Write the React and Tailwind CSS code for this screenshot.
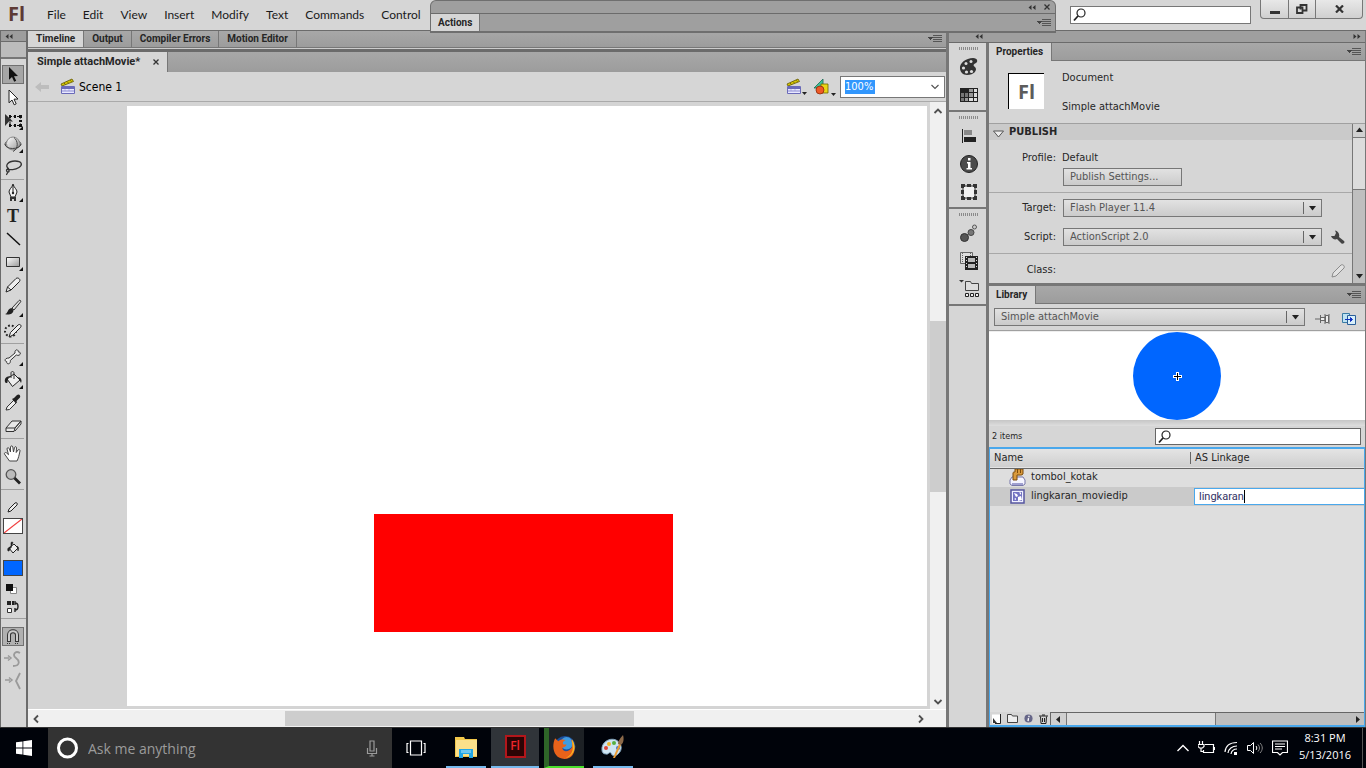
import { useState } from 'react';

const MENUS = ['File', 'Edit', 'View', 'Insert', 'Modify', 'Text', 'Commands', 'Control'];

const BOTTOM_TABS = ['Timeline', 'Output', 'Compiler Errors', 'Motion Editor'];

/* ---------- small shared glyphs ---------- */

function PanelMenuIcon() {
  return (
    <svg width="14" height="8" viewBox="0 0 14 8" shapeRendering="crispEdges" aria-hidden="true">
      <path d="M0 2h5L2.5 5z" fill="#444" />
      <path d="M5 .5h9M5 2.5h9M5 4.5h9M5 6.5h9" stroke="#555" />
    </svg>
  );
}

function DoubleArrow({ right }) {
  return (
    <svg width="8" height="5" viewBox="0 0 8 5" aria-hidden="true" className={right ? 'rotate-180' : ''}>
      <path d="M3.5 0v5L.5 2.5zM7.5 0v5L4.5 2.5z" fill="#333" />
    </svg>
  );
}

function CloseIcon() {
  return (
    <svg width="6" height="6" viewBox="0 0 6 6" stroke="#333" strokeWidth="1.3" aria-hidden="true">
      <path d="M.5.5l5 5M5.5.5l-5 5" />
    </svg>
  );
}

function SearchIcon() {
  return (
    <svg width="14" height="14" viewBox="0 0 14 14" fill="none" stroke="#222" aria-hidden="true">
      <circle cx="8" cy="5" r="4" strokeWidth="1.2" />
      <path d="M5 8L1 12.5" strokeWidth="1.8" />
    </svg>
  );
}

function Clapper() {
  return (
    <svg width="16" height="17" viewBox="0 0 16 17" aria-hidden="true">
      <path d="M1 6L12 1l1.5 2.5L2 8z" fill="#d8c800" stroke="#5f5600" strokeWidth=".8" />
      <path d="M4 5l1.5 1.5M7 3.5L8.5 5M10 2.2l1.5 1.5" stroke="#5f5600" strokeWidth=".8" />
      <path d="M1.5 8.5h13v7h-13z" fill="#e8e8ff" stroke="#6a6ab8" />
      <path d="M2 9h12v2H2z" fill="#6a6ab8" />
      <path d="M2 13h12M5 11.5v1M9 11.5v1" stroke="#8a8ad0" />
    </svg>
  );
}

function ShapesIcon() {
  return (
    <svg width="18" height="18" viewBox="0 0 18 18" aria-hidden="true">
      <path d="M1 10L10 1v9z" fill="#3dc19a" stroke="#166b52" strokeWidth=".8" />
      <path d="M8 6h7v9H8z" fill="#e9d616" stroke="#6e6400" strokeWidth=".8" />
      <circle cx="7" cy="12" r="4" fill="#ef5a26" stroke="#8d2a0b" strokeWidth=".8" />
    </svg>
  );
}

function SmallCaret() {
  return (
    <svg width="5" height="3" viewBox="0 0 5 3" aria-hidden="true">
      <path d="M0 0h5L2.5 3z" fill="#222" />
    </svg>
  );
}

function Chevron({ dir = 'down', thin }) {
  const d = {
    down: 'M1.5 3L5 6.5 8.5 3',
    up: 'M1.5 7L5 3.5 8.5 7',
    left: 'M7 1.5L3.5 5 7 8.5',
    right: 'M3 1.5L6.5 5 3 8.5',
  }[dir];
  return (
    <svg width="10" height="10" viewBox="0 0 10 10" fill="none" stroke="#505050" strokeWidth={thin ? 1.1 : 1.8} aria-hidden="true">
      <path d={d} />
    </svg>
  );
}

function Triangle({ dir = 'down' }) {
  const d = { down: 'M0 1h7L3.5 5.5z', up: 'M0 5h7L3.5.5z', left: 'M5 0v7L1 3.5z', right: 'M2 0v7l4-3.5z' }[dir];
  return (
    <svg width="7" height="7" viewBox="0 0 7 7" aria-hidden="true">
      <path d={d} fill="#222" />
    </svg>
  );
}

/* ---------- tool strip ---------- */

const TOOL_GROUPS = [
  [
    { name: 'Selection', active: true, art: <path d="M8 3l9 9-4 .2 2.2 4.6-2 1L11 13l-3 2.8z" fill="#111" /> },
    { name: 'Subselection', art: <path d="M8 3l9 9-4 .2 2.2 4.6-2 1L11 13l-3 2.8z" fill="#fff" stroke="#222" /> },
    {
      name: 'Free Transform', more: true,
      art: (
        <>
          <path d="M9 6.5h10.5v9H9z" fill="none" stroke="#111" strokeDasharray="2 1.5" />
          <path d="M8 5h2v3H8zM13 5h2v3h-2zM18 5h3v3h-3zM18 10h3v2h-3zM18 14h3v3h-3zM13 14h2v3h-2zM8 14h2v3H8z" fill="#111" />
          <path d="M4 4l8 7.5H8L4 16z" fill="#333" />
        </>
      ),
    },
    {
      name: '3D Rotation', more: true,
      art: (
        <>
          <ellipse cx="12" cy="11" rx="8" ry="4" fill="#ccc" stroke="#555" />
          <circle cx="12" cy="10.5" r="6.5" fill="url(#ball)" stroke="#888" />
          <path d="M4 11c0 6 15 6 16 0M12 18.5c6-3 5-11 1-14" fill="none" stroke="#444" />
        </>
      ),
    },
    { name: 'Lasso', art: <path d="M8 13c-5-3-1-8 6-8s8 4 4 6.5-9 2.5-11 1.5c-2 0-2 3 0 3 2-.5 1-3-1-2.5M6 15.5c1 1.5 0 3-1 3" fill="none" stroke="#333" strokeWidth="1.3" /> },
  ],
  [
    {
      name: 'Pen', more: true,
      art: (
        <>
          <path d="M12 2c1 4 4 5 4 8l-2 5h-4l-2-5c0-3 3-4 4-8z" fill="#f4f4f4" stroke="#222" />
          <path d="M12 3v7" stroke="#222" /><circle cx="12" cy="11" r="1.2" fill="#222" />
          <path d="M9 15h6v4h-2v-2h-2v2H9z" fill="#333" />
        </>
      ),
    },
    { name: 'Text', art: <text x="12" y="17" textAnchor="middle" className="fill-[#222] font-['Liberation_Serif',serif] text-[18px] font-bold">T</text> },
    { name: 'Line', art: <path d="M6 5l13 12" stroke="#111" strokeWidth="1.5" /> },
    { name: 'Rectangle', more: true, art: <path d="M5.5 6.5h13v9h-13z" fill="url(#ball)" stroke="#333" /> },
    { name: 'Pencil', art: <path d="M5 18l1.5-5L15 4.5c2-1.5 5 .8 3.5 3L10 16zM6.5 13l3.5 3" fill="#eee" stroke="#222" /> },
    {
      name: 'Brush', more: true,
      art: (
        <>
          <path d="M11 11l7-7.5c1-1 2.5.5 1.5 1.5L13 13z" fill="#ddd" stroke="#333" />
          <path d="M4 17c3 0 2-5 6.5-6l2 2c0 4-5 5.5-8.5 4z" fill="#222" />
        </>
      ),
    },
    {
      name: 'Deco',
      art: (
        <>
          <circle cx="9.5" cy="11" r="5.5" fill="none" stroke="#222" strokeWidth="2" strokeDasharray="1.8 2" />
          <path d="M8 17l1.5-4.5L17 5c2-1.5 4 .5 2.5 2.5L12 15z" fill="#eee" stroke="#222" />
        </>
      ),
    },
  ],
  [
    { name: 'Bone', more: true, art: <path d="M8 12l6-5c-.5-3 2-4 3-2.5.5.8.3 1.5.3 1.5s1.7-.3 2 1c.4 2-2 3-4 2l-6 5.5c.5 2.5-1.5 4-3 3-.8-.6-.6-2-.6-2s-1.300 0-1.5-1c-.4-1.6 1.300-2.5 3.800-2.5z" fill="#eee" stroke="#333" /> },
    {
      name: 'Paint Bucket', more: true,
      art: (
        <>
          <path d="M6 10l7-5 6 6-7.5 6.5z" fill="#eee" stroke="#222" />
          <path d="M10 9V4c0-2 3-2 3 0v6" fill="none" stroke="#333" />
          <path d="M4 13c-1-4 2-6 6-6-3 1-3 3-3.5 6.5-1 .8-2 .8-2.5-.5zM17 8c4 1 4 4 3 6z" fill="#222" />
        </>
      ),
    },
    {
      name: 'Eyedropper',
      art: (
        <>
          <path d="M5 18l1-3 7-7 2.5 2.5-7 7z" fill="#eee" stroke="#333" />
          <path d="M11 7l2-1 3-3c2-1.5 4 .5 3 2.5l-3 3-1 3z" fill="#222" />
        </>
      ),
    },
    { name: 'Eraser', art: <path d="M5 13l6-7h9l-6 7-1 3.5H5zM5 13h9M14 13l6-7v3l-6 7" fill="#e8e8e8" stroke="#333" /> },
  ],
  [
    { name: 'Hand', art: <path d="M8.5 18l-5-7c-.5-1.5 1.5-2 2.5-.7l1.5 1.4L6 6c0-1.7 1.8-1.7 2.3-.3L9.5 9V4c.2-1.5 2-1.5 2.3 0L12.5 9l1-4.5c.5-1.300 2-1 2 .5L15.2 9.5 17 7c.8-1 2.300-.3 2 1-1 4.5-1.5 7-3 10z" fill="#fff" stroke="#444" /> },
    {
      name: 'Zoom',
      art: (
        <>
          <circle cx="10" cy="8.5" r="4.8" fill="#bbb" stroke="#555" strokeWidth="1.3" />
          <path d="M13.5 12l5.5 5.5" stroke="#222" strokeWidth="2.8" />
        </>
      ),
    },
  ],
];

function Tool({ tool }) {
  return (
    <button type="button" aria-label={tool.name} className="flex h-[23px] w-full items-center justify-center">
      <span className={`flex h-[19px] w-[22px] items-center justify-center border ${tool.active ? 'border-[#707070] bg-[#a6a6a6]' : 'border-transparent'}`}>
        <svg width="24" height="22" viewBox="0 0 24 22" className="shrink-0" aria-hidden="true">
          {tool.art}
          {tool.more && <path d="M22 16v4h-4z" fill="#111" />}
        </svg>
      </span>
    </button>
  );
}

function ToolStrip() {
  return (
    <aside className="flex w-[28px] shrink-0 flex-col border-r-2 border-l border-[#6b6b6b] bg-[#d6d6d6]">
      <div className="flex h-[11px] items-center border-b border-[#6b6b6b] bg-[#9d9d9d] pl-1">
        <DoubleArrow />
      </div>
      <div className="h-[17px] border-b-2 border-[#777] bg-[#bcbcbc]" />
      <svg width="0" height="0" className="absolute">
        <defs>
          <linearGradient id="ball" x1="0" y1="0" x2="1" y2="1">
            <stop offset="0" stopColor="#fff" />
            <stop offset="1" stopColor="#999" />
          </linearGradient>
        </defs>
      </svg>
      <div className="flex flex-col pt-1 pr-0.5">
        {TOOL_GROUPS.map((group, i) => (
          <div key={i} className="flex flex-col last:pt-0.5">
            {group.map((tool) => <Tool key={tool.name} tool={tool} />)}
            <hr className="my-px border-[#a0a0a0]" />
          </div>
        ))}
      </div>

      {/* Colours */}
      <div className="flex flex-col items-center pt-2 pr-0.5">
        <svg width="16" height="16" viewBox="0 0 16 16" aria-hidden="true">
          <path d="M3 13l1-3 6-6c1.5-1 3 .4 2 2l-6 6z" fill="#eee" stroke="#222" />
        </svg>
        <button type="button" aria-label="Stroke color" className="mt-[3px] h-4 w-5 border border-[#444] bg-white">
          <svg viewBox="0 0 18 14" className="block" aria-hidden="true"><path d="M0 14L18 0" stroke="#f04040" strokeWidth="1.2" /></svg>
        </button>
        <svg width="16" height="16" viewBox="0 0 16 16" className="mt-1.5" aria-hidden="true">
          <path d="M4 8l5-4 4 4-5 5z" fill="#eee" stroke="#222" />
          <path d="M6 8V3c0-1.5 2-1.5 2 0M3 11c-1-3 1-4 3-4l-2 4zM12 6c2 1 2 3 1 5z" fill="#222" stroke="#222" strokeWidth=".6" />
        </svg>
        <button type="button" aria-label="Fill color" className="mt-1 h-4 w-5 border border-[#444] bg-[#06f]" />
        <svg width="20" height="14" viewBox="0 0 20 14" className="mt-1.5" aria-hidden="true">
          <path d="M7.5 5.5h6v6h-6z" fill="#fff" stroke="#888" />
          <path d="M3 2h7v7H3z" fill="#111" />
        </svg>
        <svg width="20" height="14" viewBox="0 0 20 14" className="mt-1" aria-hidden="true">
          <path d="M4 1h4v4H4zM9 1h2v4H9z" fill="#222" />
          <path d="M4.5 8.5h4v4h-4z" fill="#fff" stroke="#333" />
          <path d="M12 3c4 0 4 7 0 7M12 1v4M12 8v4" fill="none" stroke="#222" strokeWidth="1.4" />
        </svg>
      </div>
      <hr className="mt-1 border-[#a0a0a0]" />
      <div className="flex flex-col items-center gap-1 pt-2 pr-0.5">
        <button type="button" aria-label="Snap to Objects" className="flex h-[19px] w-[22px] items-center justify-center border border-[#707070] bg-[#b0b0b0]">
          <svg width="14" height="16" viewBox="0 0 14 16" fill="none" aria-hidden="true">
            <path d="M3 13V6c0-5 8-5 8 0v7" stroke="#333" strokeWidth="4" />
            <path d="M3 12V6c0-5 8-5 8 0v6" stroke="#ccc" strokeWidth="2" />
            <path d="M1 14.5h4M9 14.5h4" stroke="#333" strokeDasharray="1 1" />
          </svg>
        </button>
        <svg width="20" height="18" viewBox="0 0 20 18" fill="none" stroke="#9a9a9a" aria-label="Smooth">
          <path d="M1 8h5M5 5.5L8 8l-3 2.5" strokeWidth="1.5" />
          <path d="M17 3c-5-3-8 2-4 5s4 8-3 8" strokeWidth="1.8" />
        </svg>
        <svg width="20" height="18" viewBox="0 0 20 18" fill="none" stroke="#9a9a9a" aria-label="Straighten">
          <path d="M2 8h5M6 5.5L9 8l-3 2.5" strokeWidth="1.5" />
          <path d="M17 1l-4 8 4 8" strokeWidth="1.8" />
        </svg>
      </div>
    </aside>
  );
}

/* ---------- document area ---------- */

function TimelineTabs({ tab, onTab }) {
  return (
    <div className="flex h-[17px] shrink-0 items-stretch border-b border-[#777] bg-linear-to-b from-[#a8a8a8] to-[#9c9c9c]">
      {BOTTOM_TABS.map((name) => (
        <button
          key={name}
          type="button"
          onClick={() => onTab(name)}
          className={`border-r border-[#777] px-2 font-['Roboto',sans-serif] text-[10px] leading-4 font-bold text-[#262626] ${name === tab ? 'bg-[#d6d6d6]' : ''}`}
        >
          {name}
        </button>
      ))}
      <div className="ml-auto flex items-center pr-1"><PanelMenuIcon /></div>
    </div>
  );
}

function Editor() {
  const [tab, setTab] = useState('Timeline');
  return (
    <main className="flex min-w-0 flex-1 flex-col">
      <TimelineTabs tab={tab} onTab={setTab} />
      <div className="h-1 shrink-0 border-t border-[#ccc] bg-[#6b6b6b]" />
      <div className="flex shrink-0 items-stretch bg-linear-to-b from-[#a8a8a8] to-[#9c9c9c]">
        <div className="flex h-5 items-center gap-3 border-r border-[#777] bg-[#d6d6d6] pr-[7px] pl-[9px]">
          <span className="font-['Roboto',sans-serif] text-[11px] leading-5 font-bold text-[#262626]">Simple attachMovie*</span>
          <button type="button" aria-label="Close document" className="p-px"><CloseIcon /></button>
        </div>
      </div>

      {/* Edit bar */}
      <div className="flex h-[30px] shrink-0 items-center border-b border-[#aaa] bg-[#d6d6d6] pr-px pl-[7px]">
        <svg width="14" height="12" viewBox="0 0 14 12" className="mr-[11px]" aria-hidden="true">
          <path d="M0 6l6-5v3h8v4H6v3z" fill="#bdbdbd" />
        </svg>
        <Clapper />
        <span className="ml-[3px] text-[12px] text-black">Scene 1</span>
        <div className="ml-auto flex items-center">
          <button type="button" aria-label="Edit scene" className="flex items-end"><Clapper /><SmallCaret /></button>
          <button type="button" aria-label="Edit symbols" className="mr-1 ml-1.5 flex items-end"><ShapesIcon /><SmallCaret /></button>
          <label className="flex h-[22px] w-[105px] items-center justify-between border border-[#777] bg-white px-1">
            <input aria-label="Zoom" defaultValue="100%" className="w-[30px] bg-[#3297fd] text-[11px] leading-[14px] text-white outline-none" />
            <Chevron thin />
          </label>
        </div>
      </div>

      <div className="flex min-h-0 flex-1 bg-[#d4d4d4]">
        <div className="flex min-w-0 flex-1 pt-1 pr-[3px] pb-[3px] pl-[99px]">
          <div className="relative flex-1 bg-white">
            <div className="absolute top-[408px] left-[247px] h-[118px] w-[299px] bg-[#f00]" />
          </div>
        </div>
        <div className="flex w-4 shrink-0 flex-col items-center justify-between bg-[#f0f0f0] pt-1 pb-0.5">
          <Chevron dir="up" />
          <div className="h-[171px] w-4 bg-[#cdcdcd]" />
          <Chevron />
        </div>
      </div>
      <div className="flex h-[18px] shrink-0 items-center justify-between border-t border-white bg-[#f0f0f0] pr-5 pl-[3px]">
        <Chevron dir="left" />
        <div className="mr-[38px] h-[15px] w-[349px] bg-[#cdcdcd]" />
        <Chevron dir="right" />
      </div>
    </main>
  );
}

/* ---------- icon dock ---------- */

const DOCK = [
  [
    {
      name: 'Color',
      art: (
        <>
          <path d="M1 12C0 6 7 1 14 1c5 0 5 4 3 5-3 1.5-3 2.5-1 4 3 3-1 8-8 8-4 0-6.5-3-7-6z" fill="#333" />
          <g fill="#ddd"><circle cx="4.5" cy="11" r="1.6" /><circle cx="7" cy="6.5" r="1.5" /><circle cx="12" cy="4.5" r="1.5" /><circle cx="7.5" cy="15" r="1.6" /><circle cx="12.5" cy="14.5" r="1.6" /></g>
        </>
      ),
    },
    {
      name: 'Swatches',
      art: (
        <>
          <path d="M1 3h18v14H1z" fill="#222" />
          <path d="M2 8h3v4H2zM2 13h3v3H2zM6 8h3v4H6z" fill="#777" />
          <path d="M10 4h4v3h-4zM10 8h4v4h-4zM6 13h3v3H6z" fill="#999" />
          <path d="M15 4h3v3h-3zM15 8h3v4h-3zM10 13h4v3h-4zM15 13h3v3h-3z" fill="#ddd" />
        </>
      ),
    },
  ],
  [
    {
      name: 'Align',
      art: (
        <>
          <path d="M3.5 3v14" stroke="#222" />
          <path d="M5 4h8v5H5z" fill="#888" />
          <path d="M5 11h12v5H5z" fill="#222" />
        </>
      ),
    },
    {
      name: 'Info',
      art: (
        <>
          <circle cx="10" cy="10" r="8.5" fill="#4a4a4a" stroke="#222" />
          <path d="M8 8h3.5v6H13v1.5H7.5V14H9V9.5H8zM9 4h2.5v2.5H9z" fill="#fff" />
        </>
      ),
    },
    {
      name: 'Transform',
      art: (
        <>
          <path d="M4 4h12v12H4z" fill="#f2f2f2" stroke="#333" />
          <path d="M2 2h4v4H2zM8 2h4v3H8zM14 2h4v4h-4zM2 8h3v4H2zM15 8h3v4h-3zM2 14h4v4H2zM8 15h4v3H8zM14 14h4v4h-4z" fill="#333" />
          <path d="M5 5h10v10H5z" fill="#f2f2f2" />
        </>
      ),
    },
  ],
  [
    {
      name: 'Motion Presets',
      art: (
        <>
          <circle cx="5.5" cy="14.5" r="4" fill="#555" stroke="#333" />
          <circle cx="12" cy="9.5" r="3" fill="#777" stroke="#444" />
          <circle cx="15.5" cy="4" r="2" fill="#ccc" stroke="#555" />
        </>
      ),
    },
    {
      name: 'Project',
      art: (
        <>
          <path d="M1.5 1.5h12v11h-12z" fill="#ddd" stroke="#666" />
          <path d="M3.5 2v11M11.5 2v4" stroke="#666" strokeDasharray="1 1" />
          <path d="M6 5h13v14H6z" fill="#222" />
          <path d="M9 7h7v4H9zM9 13h7v4H9z" fill="#bbb" />
          <path d="M7.5 6v12M17.5 6v12" stroke="#ddd" strokeDasharray="1 2" />
        </>
      ),
    },
    {
      name: 'Components',
      art: (
        <>
          <path d="M0 1h5L2.5 3.5z" fill="#333" />
          <path d="M6.5 11.5v-9h5l1 2h7v7z" fill="#ddd" stroke="#444" />
          <path d="M6.5 14.5h3v3h-3zM11.5 14.5h3v3h-3zM16.5 14.5h3v3h-3z" fill="#eee" stroke="#222" />
        </>
      ),
    },
  ],
];

function Dock() {
  return (
    <nav className="flex w-[37px] shrink-0 flex-col bg-[#d6d6d6]">
      {DOCK.map((group, i) => (
        <div key={i} className="flex flex-col items-center border-b-2 border-[#777] pt-1 pb-px pl-0.5">
          <div className="mb-[3px] h-[3px] w-5 bg-[repeating-linear-gradient(90deg,#8a8a8a_0_1px,transparent_1px_2px)]" />
          {group.map((item) => (
            <button key={item.name} type="button" aria-label={item.name} className="flex h-7 w-full items-center justify-center">
              <svg width="20" height="20" viewBox="0 0 20 20" aria-hidden="true">{item.art}</svg>
            </button>
          ))}
        </div>
      ))}
    </nav>
  );
}

/* ---------- right panels ---------- */

function PanelTabs({ name }) {
  return (
    <div className="flex h-[18px] shrink-0 items-stretch bg-linear-to-b from-[#a8a8a8] to-[#9c9c9c]">
      <div className="border-r border-[#777] bg-[#d6d6d6] pr-2 pl-[7px] font-['Roboto',sans-serif] text-[10px] leading-[18px] font-bold text-[#262626]">{name}</div>
      <div className="flex flex-1 items-center justify-end border-b border-[#777] pr-1"><PanelMenuIcon /></div>
    </div>
  );
}

function DropField({ id, value, label, className = '' }) {
  return (
    <div className={`relative h-[18px] border border-[#777] bg-linear-to-b from-[#e2e2e2] to-[#cbcbcb] ${className}`}>
      <select id={id} aria-label={label} className="h-4 w-full appearance-none bg-transparent pl-1.5 text-[11px] leading-4 text-[#555] outline-none">
        <option>{value}</option>
      </select>
      <span className="pointer-events-none absolute top-0.5 right-0 flex h-3 w-[18px] items-center justify-center border-l border-[#666]"><Triangle /></span>
    </div>
  );
}

function Properties() {
  return (
    <section className="flex flex-col bg-[#d6d6d6] text-[11px] text-[#262626]">
      <PanelTabs name="Properties" />
      <div className="flex h-[62px] pt-3 pl-[19px]">
        <div className="flex h-9 w-9 items-center justify-center border-t border-l border-black bg-white font-['Open_Sans',sans-serif] text-[20px] font-bold text-[#5c5c5c]">
          Fl
        </div>
        <div className="-mt-[3px] ml-[18px] flex flex-col gap-[13px] leading-4">
          <p>Document</p>
          <p>Simple attachMovie</p>
        </div>
      </div>
      <div className="flex h-40 border-t border-[#a0a0a0]">
        <div className="min-w-0 flex-1">
          <h2 className="flex h-4 items-center gap-[5px] bg-[#cacaca] pl-1 text-[11px] font-bold">
            <svg width="11" height="8" viewBox="0 0 11 8" className="mt-1" aria-hidden="true"><path d="M.5 1h10l-5 6z" fill="#eee" stroke="#555" /></svg>
            PUBLISH
          </h2>
          <div className="flex h-[53px] gap-1.5 border-b border-[#a8a8a8] pt-[10px] leading-4">
            <span className="w-[67px] text-right">Profile:</span>
            <div>
              <p>Default</p>
              <button type="button" className="mt-0.5 ml-px block h-[18px] w-[119px] border border-[#777] bg-linear-to-b from-[#e2e2e2] to-[#cbcbcb] pl-1.5 text-left leading-4 text-[#555]">
                Publish Settings...
              </button>
            </div>
          </div>
          <div className="flex flex-col gap-[11px] border-b border-[#a8a8a8] pt-1.5 pb-[7px]">
            <div className="flex items-center gap-[7px]">
              <label htmlFor="target" className="w-[67px] text-right">Target:</label>
              <DropField id="target" value="Flash Player 11.4" className="w-[259px]" />
            </div>
            <div className="flex items-center gap-[7px]">
              <label htmlFor="script" className="w-[67px] text-right">Script:</label>
              <DropField id="script" value="ActionScript 2.0" className="w-[259px]" />
              <button type="button" aria-label="ActionScript settings" className="ml-0.5">
                <svg width="14" height="14" viewBox="0 0 14 14" aria-hidden="true">
                  <path d="M0 6c1 3 4 4 6 3l4.5 4.5c1.5 1 4-1 2.5-2.5L8 7c1-3-1-6-4-6.5L5 3 3.500 6z" fill="#444" />
                </svg>
              </button>
            </div>
          </div>
          <div className="flex h-7 items-center pr-1.5">
            <span className="mt-1 w-[67px] text-right">Class:</span>
            <svg width="16" height="16" viewBox="0 0 16 16" className="mt-1.5 ml-auto" aria-label="Edit class">
              <path d="M2 14l1-4 8-8c2-1 4 1 3 3l-8 8z" fill="#e2e2e2" stroke="#8a8a8a" />
            </svg>
          </div>
        </div>
        <div className="flex w-[13px] shrink-0 flex-col items-center border-l border-[#777] bg-[#bfbfbf]">
          <div className="flex h-[14px] w-full items-center justify-center border-b border-[#777] bg-[#d0d0d0]"><Triangle dir="up" /></div>
          <div className="h-[52px] w-full border-b border-[#777] bg-[#dcdcdc]" />
          <div className="mt-auto flex h-[14px] items-center"><Triangle /></div>
        </div>
      </div>
    </section>
  );
}

function ButtonSymbol() {
  return (
    <svg width="17" height="17" viewBox="0 0 17 17" aria-hidden="true">
      <path d="M1 11l2-3h11l2 3v4l-2 1.5H3L1 15z" fill="#f4f4ff" stroke="#7777aa" />
      <path d="M3 15h11" stroke="#a0a0d0" strokeWidth="2" />
      <path d="M4 11V4c0-1 1-1 2-1V0h8v5c-1 1.500-3 1-6 1v5z" fill="#d99a3c" stroke="#7a4a0c" />
      <path d="M8.5 0v4M11.5 0v4" stroke="#7a4a0c" />
    </svg>
  );
}

function ClipSymbol() {
  return (
    <svg width="15" height="15" viewBox="0 0 15 15" aria-hidden="true">
      <path d="M1 1h13v13H1z" fill="#f0f0ff" stroke="#5555a0" strokeWidth="1.5" />
      <path d="M3 3h9v9H3z" fill="#7474c4" />
      <path d="M4 4l3 1 1 2-2 1zM8 8l3-1 1 4-4 1zM9 3.5h2V6zM4 10l2-1v2z" fill="#fff" />
    </svg>
  );
}

function Library() {
  const [linkage, setLinkage] = useState('lingkaran');
  return (
    <section className="flex min-h-0 flex-1 flex-col bg-[#d6d6d6] text-[11px] text-[#262626]">
      <PanelTabs name="Library" />
      <div className="flex h-[27px] shrink-0 items-center border-b border-[#a0a0a0] pr-2 pl-[5px]">
        <DropField label="Document" value="Simple attachMovie" className="flex-1" />
        <button type="button" aria-label="Pin library" className="mt-1 ml-2.5">
          <svg width="15" height="12" viewBox="0 0 15 12" fill="#eee" stroke="#666" aria-hidden="true">
            <path d="M0 6h5M5.5 2v8M6 4.5h4v3H6M10.5 2.5h3v7h-3zM10 1v10M14 1v10" />
          </svg>
        </button>
        <button type="button" aria-label="New library panel" className="mt-1 ml-3">
          <svg width="15" height="12" viewBox="0 0 15 12" aria-hidden="true">
            <path d="M.5.5h7v9h-7z" fill="#bfe3f2" stroke="#3a7ca5" />
            <path d="M5.5 2.5h8v9h-8z" fill="#d9f0fa" stroke="#2a5f9a" />
            <path d="M3 6.5h6M8.5 4.5l2 2-2 2z" fill="#1030c0" stroke="#1030c0" />
          </svg>
        </button>
      </div>
      <div className="flex h-[89px] shrink-0 items-center justify-center border-t border-[#eee] bg-white">
        <svg width="88" height="88" viewBox="0 0 88 88" aria-label="Symbol preview">
          <circle cx="44" cy="44" r="44" fill="#06f" />
          <path d="M40 44.5h9M44.5 40v9" stroke="#fff" strokeWidth="3" />
          <path d="M41 44.5h7M44.5 41v7" stroke="#000" />
        </svg>
      </div>
      <div className="h-1.5 shrink-0 bg-linear-to-b from-[#c6c6c6] to-[#dedede]" />
      <div className="flex h-[21px] shrink-0 items-center justify-between pr-1 pl-[3px]">
        <span className="text-[9px]">2 items</span>
        <label className="flex h-[17px] w-[206px] items-center border border-[#666] bg-white pl-0.5">
          <SearchIcon />
          <input aria-label="Search library" className="ml-1 min-w-0 flex-1 bg-transparent outline-none" />
        </label>
      </div>

      <div className="flex min-h-0 flex-1 flex-col border border-y-2 border-[#4aa8ec] bg-[#dedede]">
        <table className="w-full table-fixed border-collapse text-left">
          <thead>
            <tr className="h-[19px] border-b border-[#666] bg-linear-to-b from-[#e4e4e4] to-[#cfcfcf]">
              <th className="w-[204px] p-0 pl-1 font-normal leading-4">Name</th>
              <th className="p-0 font-normal leading-3"><span className="-ml-1 block border-l border-[#666] pl-1">AS Linkage</span></th>
            </tr>
          </thead>
          <tbody>
            <tr className="h-[18px]">
              <td className="p-0"><span className="flex h-[18px] items-center gap-[5px] pl-[19px]"><ButtonSymbol />tombol_kotak</span></td>
              <td className="p-0" />
            </tr>
            <tr className="h-[19px] bg-[#cacaca]">
              <td className="p-0"><span className="flex h-[18px] items-center gap-1.5 pl-5"><ClipSymbol />lingkaran_moviedip</span></td>
              <td className="p-0">
                <label className="flex h-[17px] items-center border border-r-0 border-[#4aa8ec] bg-white pl-1">
                  <input
                    aria-label="AS Linkage"
                    value={linkage}
                    onChange={(e) => setLinkage(e.target.value)}
                    className="field-sizing-content bg-transparent font-['Roboto',sans-serif] text-[11px] leading-[15px] text-[#333366] outline-none"
                  />
                  {/* Text cursor */}
                  <span className="h-[13px] w-px bg-black" />
                </label>
              </td>
            </tr>
          </tbody>
        </table>
        <div className="mt-auto flex h-[13px] items-stretch bg-[#d6d6d6]">
          <div className="flex items-center gap-1.5 px-0.5">
            <svg width="9" height="10" viewBox="0 0 9 10" aria-label="New symbol"><path d="M0 .5h8.5v9H0z" fill="#fff" /><path d="M8.5 0v9.5H3" fill="none" stroke="#222" /><path d="M1 4l4 5H1z" fill="#333" /></svg>
            <svg width="11" height="9" viewBox="0 0 11 9" aria-label="New folder"><path d="M.5 8.5v-8h4l1 1.5h5v6.5z" fill="#eee" stroke="#444" /></svg>
            <svg width="9" height="9" viewBox="0 0 10 10" aria-label="Item properties"><circle cx="5" cy="5" r="4.5" fill="#668" /><path d="M5.5 2v1.5M5 4.5L4.5 8" stroke="#fff" strokeWidth="1.5" /></svg>
            <svg width="9" height="10" viewBox="0 0 9 10" fill="none" stroke="#222" aria-label="Delete"><path d="M0 2h9M3 1h3M1.5 2.5l.5 7h5l.5-7M3.5 4v4M5.5 4v4" /></svg>
          </div>
          <div className="flex flex-1 items-stretch border-t border-l border-[#666] bg-[#bfbfbf]">
            <div className="flex w-4 items-center justify-center border-r border-[#777] bg-[#d0d0d0]"><Triangle dir="left" /></div>
            <div className="w-[149px] border-r border-[#777] bg-[#dcdcdc]" />
            <div className="ml-auto flex items-center pr-[3px]"><Triangle dir="right" /></div>
          </div>
        </div>
      </div>
    </section>
  );
}

/* ---------- top bar ---------- */

function TopBar() {
  return (
    <header className="flex h-[31px] shrink-0 items-start border-b border-[#6b6b6b] bg-[#d6d6d6]">
      <span className="ml-2 w-8 font-['Open_Sans',sans-serif] text-[20px] leading-[27px] font-bold text-[#5d3a35]">Fl</span>
      <nav className="flex gap-[17px] pl-[7px] font-['Lato',sans-serif] text-[12px] leading-[30px] text-[#1a1a1a]">
        {MENUS.map((name) => <button key={name} type="button">{name}</button>)}
      </nav>
      <label className="mt-1.5 ml-auto flex h-[18px] w-[181px] items-center border border-[#777] bg-white pl-0.5">
        <SearchIcon />
        <input aria-label="Search help" className="ml-1 min-w-0 flex-1 bg-transparent text-[11px] outline-none" />
      </label>
      <div className="mr-[3px] ml-[9px] flex h-[19px] overflow-hidden rounded-b border border-t-0 border-[#777] bg-linear-to-b from-[#e8e8e8] to-[#d0d0d0]">
        <button type="button" aria-label="Minimize" className="flex w-[27px] items-center justify-center pt-1.5"><span className="h-[3px] w-2.5 bg-[#333]" /></button>
        <button type="button" aria-label="Restore" className="flex w-7 items-center justify-center border-x border-[#777]">
          <svg width="12" height="10" viewBox="0 0 12 10" fill="none" stroke="#333" strokeWidth="1.8" aria-hidden="true"><path d="M4.5 5.5V1h6v5.5h-4M1 3.5h5.5V9H1z" /></svg>
        </button>
        <button type="button" aria-label="Close" className="flex w-[46px] items-center justify-center">
          <svg width="9" height="8" viewBox="0 0 9 8" stroke="#333" strokeWidth="2.2" aria-hidden="true"><path d="M1 .5l7 7M8 .5l-7 7" /></svg>
        </button>
      </div>
    </header>
  );
}

function ActionsPanel() {
  return (
    <div className="absolute top-0 left-[430px] w-[626px] rounded-t-md border border-b-2 border-[#6f6f6f] bg-[#9f9f9f]">
      <div className="flex h-[13px] items-center justify-end gap-2 border-b border-[#6b6b6b] pr-[5px]">
        <DoubleArrow />
        <CloseIcon />
      </div>
      <div className="flex h-[17px] items-stretch">
        <div className="border-r border-[#777] bg-[#d6d6d6] px-[7px] font-['Roboto',sans-serif] text-[10px] leading-[17px] font-bold text-[#262626]">Actions</div>
        <div className="ml-auto flex items-center pr-1"><PanelMenuIcon /></div>
      </div>
    </div>
  );
}

/* ---------- taskbar ---------- */

function Taskbar() {
  return (
    <footer className="flex h-[41px] shrink-0 items-stretch border-t border-[#333] bg-[#00030a] font-['Open_Sans',sans-serif] text-white">
      <button type="button" aria-label="Start" className="flex w-12 items-center justify-center">
        <svg width="16" height="16" viewBox="0 0 16 16" fill="#fff" aria-hidden="true"><path d="M0 2.3L6.5 1.4v6.2H0zM7.3 1.3L16 0v7.6H7.3zM0 8.4h6.5v6.2L0 13.7zM7.3 8.4H16V16l-8.7-1.3z" /></svg>
      </button>
      <label className="flex w-[344px] items-center bg-[#333] pr-3.5 pl-2">
        <svg width="22" height="24" viewBox="0 0 22 24" aria-hidden="true"><circle cx="11.5" cy="12" r="9" fill="none" stroke="#fff" strokeWidth="3" /></svg>
        <input aria-label="Search" placeholder="Ask me anything" className="ml-2.5 min-w-0 flex-1 bg-transparent text-[14px] outline-none placeholder:text-[#9b9b9b]" />
        <svg width="12" height="17" viewBox="0 0 12 17" fill="none" stroke="#9b9b9b" strokeWidth="1.2" aria-hidden="true">
          <path d="M4 1h4v10H4zM1.5 8v5.5h9V8M6 13.5V16M3.5 16h5" />
        </svg>
      </label>
      <button type="button" aria-label="Task view" className="flex w-12 items-center justify-center">
        <svg width="20" height="16" viewBox="0 0 20 16" fill="none" stroke="#fff" strokeWidth="1.2" aria-hidden="true"><path d="M4.5 1h11v14h-11zM2.5 3.5H1v9h1.5M17.5 3.5H19v9h-1.5" /></svg>
      </button>
      <button type="button" aria-label="File Explorer" className="ml-1.5 flex w-10 items-center justify-center border-b-2 border-[#76b9ed]">
        <svg width="22" height="21" viewBox="0 0 22 21" aria-hidden="true">
          <path d="M0 0h9l1 2h12v18H0z" fill="#f2c84b" /><path d="M1 3h21v16H1z" fill="#fbe08a" />
          <path d="M4 21v-9h14v9h-4v-4H8v4z" fill="#22a7e8" /><path d="M6 13h10v3H6z" fill="#6cc8f2" />
        </svg>
      </button>
      <button type="button" aria-label="Flash" className="ml-[5px] flex w-12 items-center justify-center border-b-2 border-[#76b9ed] bg-[#303439]">
        <span className="mb-0.5 flex h-[23px] w-[21px] items-center justify-center border-2 border-[#b3161b] bg-[#2c0405] text-[12px] leading-none font-semibold text-[#f0262c]">Fl</span>
      </button>
      <button type="button" aria-label="Firefox" className="ml-[5px] flex w-10 items-center justify-center border-b-2 border-l-5 border-b-[#4be02c] border-l-[#2e6528] bg-[#1d2125] pr-[5px]">
        <svg width="23" height="24" viewBox="0 0 22 23" className="shrink-0" aria-hidden="true">
          <circle cx="11.5" cy="11" r="10" fill="#1c4f9c" />
          <circle cx="13" cy="8" r="6" fill="#3f9be0" />
          <path d="M2 3l3 3c2-2 5-2 7-1-3 1-3 3-2 4h3c-1 3-4 2-4 4 1 4 7 3 9-1 1-3 0-6-1-8 6 5 5 19-6 19C1 23-2 12 2 3z" fill="#e8621a" />
          <path d="M18 4c5 6 3 16-6 18 5-2 7-6 7-10z" fill="#f9b821" />
        </svg>
      </button>
      <button type="button" aria-label="Paint" className="ml-[9px] flex w-10 items-center justify-center border-b-2 border-[#76b9ed]">
        <svg width="24" height="24" viewBox="0 0 24 24" aria-hidden="true">
          <path d="M1 15C0 8 8 2 15 5c6 3 7 10 2 14-3 3-6 2-7-1-1-2-3 2-5 1-3 0-4-2-4-4z" fill="#cfe5f3" stroke="#86a9c2" />
          <circle cx="5" cy="13" r="2" fill="#e0483a" /><circle cx="8" cy="9" r="2" fill="#f1b72c" /><circle cx="13" cy="8" r="2" fill="#55b043" /><circle cx="17" cy="13" r="2" fill="#3a6fd0" />
          <path d="M12 23l6-14 2 1-6 13z" fill="#e99b35" /><path d="M17 9c0-4 3-6 5-9 1 3 1 8-2 10z" fill="#8c6a4a" />
        </svg>
      </button>

      <div className="ml-auto flex items-center gap-[9px]">
        <svg width="12" height="8" viewBox="0 0 12 8" fill="none" stroke="#fff" strokeWidth="1.4" aria-hidden="true"><path d="M.5 7L6 1.5 11.5 7" /></svg>
        <svg width="17" height="14" viewBox="0 0 17 14" fill="none" stroke="#fff" aria-hidden="true"><path d="M7 3.5h8.5v8H5.5V9M16.5 6v3M1.5 0v3M4.5 0v3M0 3.5h6v2L4.5 7h-3L0 5.5zM3 7v3.5h2" strokeWidth="1.2" /></svg>
        <svg width="14" height="14" viewBox="0 0 14 14" fill="none" stroke="#fff" strokeWidth="1.2" aria-hidden="true">
          <path d="M1 11C1.5 5 6 1.5 13 1.5M4 12c.5-4 4-7 9-7M7 13c.5-3 3-5 6-5" /><path d="M10 11h3v3h-3z" fill="#fff" stroke="none" />
        </svg>
        <svg width="16" height="14" viewBox="0 0 16 14" fill="none" stroke="#fff" aria-hidden="true">
          <path d="M.5 4.5h3l3-3v11l-3-3h-3zM9 5c1 1 1 3 0 4" /><path d="M11 3.5c2 2 2 5 0 7M13 2c3 3 3 7 0 10" stroke="#888" />
        </svg>
        <svg width="16" height="16" viewBox="0 0 16 16" fill="none" stroke="#fff" strokeWidth="1.2" aria-hidden="true"><path d="M.5 1h15v11.5h-5L8 15l-2.5-2.5h-5zM3 4h10M3 6.5h10M3 9h7" /></svg>
        <div className="-mt-1 w-14 text-center text-[11px] leading-[17px]">
          <p>8:31 PM</p>
          <p>5/13/2016</p>
        </div>
        <div className="h-full w-1 border-l border-[#555]" />
      </div>
    </footer>
  );
}

export default function App() {
  return (
    <div className="relative flex h-screen flex-col overflow-hidden bg-[#777] font-['DejaVu_Sans_Condensed','DejaVu_Sans',sans-serif] text-[11px]">
      <TopBar />
      <div className="flex min-h-0 flex-1">
        <ToolStrip />
        <Editor />
        <div className="flex w-[420px] shrink-0 flex-col pr-px pl-[3px]">
          <div className="flex h-[12px] shrink-0 items-center justify-between border-b border-[#6b6b6b] bg-[#9f9f9f] pr-1 pl-[26px]">
            <DoubleArrow />
            <DoubleArrow right />
          </div>
          <div className="flex min-h-0 flex-1 gap-[3px]">
            <Dock />
            <div className="flex min-w-0 flex-1 flex-col gap-[3px]">
              <Properties />
              <Library />
            </div>
          </div>
        </div>
      </div>
      <Taskbar />
      <ActionsPanel />
    </div>
  );
}
